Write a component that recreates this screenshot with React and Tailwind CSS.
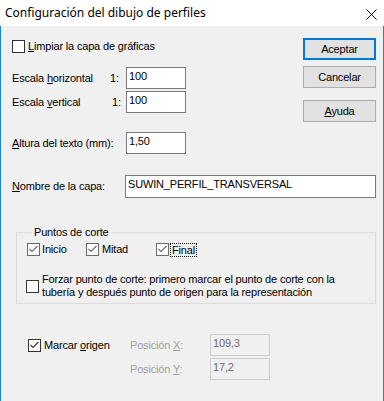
import React from "react";

function Box({ checked, light }) {
  return (
    <span
      className={
        "flex h-[13px] w-[13px] shrink-0 items-center justify-center bg-white border " +
        (light ? "border-[#6a6a6a]" : "border-[#333333]")
      }
    >
      {checked && (
        <svg width="11" height="11" viewBox="0 0 11 11" className="block">
          <path
            d="M1.5 5 L4 7.5 L9.5 2"
            fill="none"
            stroke={light ? "#6a6a6a" : "#333333"}
            strokeWidth="1.1"
          />
        </svg>
      )}
    </span>
  );
}

function Field({ value, w, h, disabled }) {
  return (
    <div
      className={
        "flex shrink-0 items-start border pl-[2px] pt-[2px] leading-[13px] " +
        (disabled
          ? "border-[#cccccc] bg-[#f0f0f0] text-[#6d6d6d]"
          : "border-[#7a7a7a] bg-white text-black")
      }
      style={{ width: w, height: h }}
    >
      {value}
    </div>
  );
}

function Btn({ children, primary, className = "" }) {
  return (
    <div
      className={
        "flex h-[22px] w-[73px] items-center justify-center bg-[#e1e1e1] leading-[13px] " +
        (primary ? "border-2 border-[#0078d7] " : "border border-[#adadad] ") +
        className
      }
    >
      {children}
    </div>
  );
}

export default function App() {
  return (
    <div className="flex h-[401px] w-[384px] flex-col overflow-hidden bg-[#f0f0f0] font-['Liberation_Sans',Arial,sans-serif] text-[11px] tracking-[-0.17px] text-black">
      {/* title bar */}
      <div className="flex h-[26px] shrink-0 items-center justify-between bg-white pl-[5px] pr-[7px] font-['Noto_Sans',sans-serif] text-[12px] tracking-normal">
        <span>Configuración del dibujo de perfiles</span>
        <svg width="11" height="11" viewBox="0 0 11 11" className="mt-[2px] block">
          <path d="M0.5 0.5 L10.5 10.5 M10.5 0.5 L0.5 10.5" stroke="#000" strokeWidth="1" />
        </svg>
      </div>

      {/* body */}
      <div className="flex flex-1 flex-col border-l border-r border-[#1883d7] pl-[11px] pr-[7px] leading-[13px]">
        <div className="flex">
          <div className="flex flex-col">
            <div className="mt-[14px] flex h-[13px] items-center gap-[3px]">
              <Box />
              <span>
                <u>L</u>impiar la capa de gráficas
              </span>
            </div>
            <div className="mt-[14px] flex h-[22px] items-center">
              <span className="w-[98px]">
                Escala <u>h</u>orizontal
              </span>
              <span className="w-[16px]">1:</span>
              <Field value="100" w={60} h={22} />
            </div>
            <div className="mt-[2px] flex h-[22px] items-center">
              <span className="w-[100px]">
                Escala <u>v</u>ertical
              </span>
              <span className="w-[14px]">1:</span>
              <Field value="100" w={60} h={22} />
            </div>
            <div className="mt-[19px] flex h-[22px] items-center">
              <span className="w-[114px]">
                <u>A</u>ltura del texto (mm):
              </span>
              <Field value="1,50" w={60} h={22} />
            </div>
          </div>
          <div className="ml-auto flex flex-col pt-[12px]">
            <Btn primary>Aceptar</Btn>
            <Btn className="mt-[6px]">Cancelar</Btn>
            <Btn className="mt-[12px]">
              <span>
                <u>A</u>yuda
              </span>
            </Btn>
          </div>
        </div>

        <div className="mt-[21px] flex h-[23px] items-center">
          <span className="w-[114px]">
            <u>N</u>ombre de la capa:
          </span>
          <Field value="SUWIN_PERFIL_TRANSVERSAL" w={251} h={23} />
        </div>

        <fieldset className="ml-[4px] mt-[28px] w-[360px] border border-[#dcdcdc] pb-[4px] pl-[10px]">
          <legend className="ml-[5px] px-[2px] leading-[13px]">Puntos de corte</legend>
          <div className="mt-[4px] flex h-[13px] items-center">
            <div className="flex w-[59px] items-center gap-[2px]">
              <Box checked light />
              <span>Inicio</span>
            </div>
            <div className="flex w-[70px] items-center gap-[3px]">
              <Box checked light />
              <span>Mitad</span>
            </div>
            <div className="flex items-center gap-[1px]">
              <Box checked light />
              <span className="border border-dotted border-black px-[1px] leading-[12px]">Final</span>
            </div>
          </div>
          <div className="-ml-px mt-[17px] flex items-center gap-[3px]">
            <Box />
            <span className="leading-[13px]">
              Forzar punto de corte: primero marcar el punto de corte con la
              <br />
              tubería y después punto de origen para la representación
            </span>
          </div>
        </fieldset>

        <div className="mt-[30px] flex">
          <div className="flex h-[22px] w-[118px] items-center gap-[3px] pl-[16px]">
            <Box checked />
            <span>
              Marcar <u>o</u>rigen
            </span>
          </div>
          <div className="flex flex-col gap-[2px]">
            <div className="flex h-[22px] items-center">
              <span className="w-[80px] text-[#a0a0a0]">
                Posición <u>X</u>:
              </span>
              <Field value="109,3" w={60} h={22} disabled />
            </div>
            <div className="flex h-[22px] items-center">
              <span className="w-[80px] text-[#a0a0a0]">
                Posición <u>Y</u>:
              </span>
              <Field value="17,2" w={60} h={22} disabled />
            </div>
          </div>
        </div>
      </div>
    </div>
  );
}
